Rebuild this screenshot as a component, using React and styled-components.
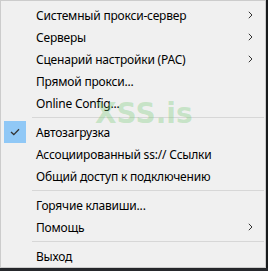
import styled, { createGlobalStyle } from 'styled-components';

const items = [
  { label: 'Системный прокси-сервер', sub: true },
  { label: 'Серверы', sub: true },
  { label: 'Сценарий настройки (PAC)', sub: true },
  { label: 'Прямой прокси...' },
  { label: 'Online Config...' },
  { sep: true },
  { label: 'Автозагрузка', checked: true },
  { label: 'Ассоциированный ss:// Ссылки' },
  { label: 'Общий доступ к подключению' },
  { sep: true },
  { label: 'Горячие клавиши...' },
  { label: 'Помощь', sub: true },
  { sep: true },
  { label: 'Выход' },
];

function App() {
  return (
    <>
      <GlobalStyle />
      <Screen>
        <Menu>
          {items.map((it, i) =>
            it.sep ? (
              <Separator key={i} />
            ) : (
              <Item key={i}>
                <Check $checked={it.checked}>
                  {it.checked && (
                    <svg width="10" height="8" viewBox="0 0 10 8">
                      <path d="M1 4 L3.8 6.6 L9 1.2" fill="none" stroke="#333" strokeWidth="1.3" />
                    </svg>
                  )}
                </Check>
                <Label>{it.label}</Label>
                {it.sub && (
                  <Arrow>
                    <svg width="5" height="8" viewBox="0 0 5 8">
                      <path d="M0.8 0.8 L4 4 L0.8 7.2" fill="none" stroke="#333" strokeWidth="1" />
                    </svg>
                  </Arrow>
                )}
              </Item>
            )
          )}
          <Watermark>XSS.is</Watermark>
        </Menu>
      </Screen>
    </>
  );
}

const GlobalStyle = createGlobalStyle`
  body {
    margin: 0;
    background: #26282c;
    font-family: "Noto Sans", "Liberation Sans", sans-serif;
  }
`;

const Screen = styled.div`
  width: 268px;
  height: 271px;
  overflow: hidden;
`;

const Menu = styled.div`
  position: relative;
  width: 266px;
  height: 268px;
  box-sizing: border-box;
  background: #f0f0f0;
  border: 1px solid #cccccc;
  padding: 3px 2px 0;
  box-shadow: 2px 0 1px rgba(0, 0, 0, 0.35);
  display: flex;
  flex-direction: column;
`;

const Item = styled.div`
  flex-shrink: 0;
  height: 22px;
  display: flex;
  align-items: center;
  font-size: 12px;
  letter-spacing: -0.2px;
  color: #000;
`;

const Check = styled.div`
  width: 22px;
  height: 22px;
  margin-left: 1px;
  margin-right: 10px;
  display: flex;
  align-items: center;
  justify-content: center;
  background: ${(p) => (p.$checked ? '#90c8f6' : 'transparent')};
`;

const Label = styled.span`
  flex: 1;
  white-space: nowrap;
`;

const Arrow = styled.span`
  width: 5px;
  height: 8px;
  display: flex;
  margin-right: 10px;
`;

const Separator = styled.div`
  flex-shrink: 0;
  height: 1px;
  background: #d7d7d7;
  margin: 3px 0 3px 29px;
  width: 232px;
`;

const Watermark = styled.div`
  position: absolute;
  left: 94px;
  top: 96px;
  font-family: "DejaVu Sans", Verdana, sans-serif;
  font-weight: bold;
  font-size: 28px;
  color: rgba(110, 200, 110, 0.32);
  pointer-events: none;
`;

export default App;
